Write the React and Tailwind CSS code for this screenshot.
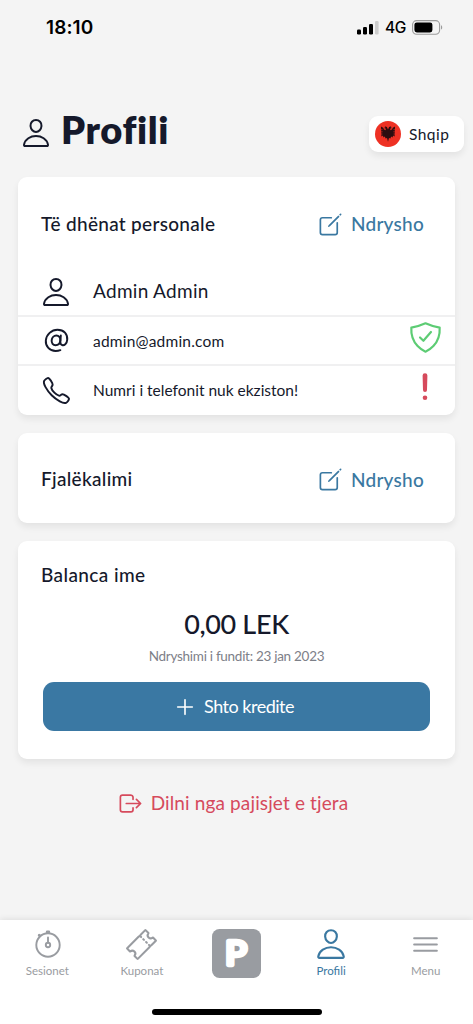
import {
  IoAddOutline,
  IoAtOutline,
  IoCallOutline,
  IoCreateOutline,
  IoLogOutOutline,
  IoMenuOutline,
  IoPersonOutline,
  IoShieldCheckmarkOutline,
  IoTicketOutline,
} from "react-icons/io5";

const EagleFlag = () => (
  <svg width="26" height="26" viewBox="0 0 26 26" className="shrink-0">
    <circle cx="13" cy="13" r="13" fill="#ee3124" />
    <path
      d="M13 8.4 11.9 6 9.8 5.2 10.4 6.3 9 7 10.6 7.6 10.8 9.2 9 8.6 8.2 6.8 6 5.4 6.4 15.6 8 14.4 8.4 16.6 9.8 15.4 10.6 17.6 12 17 13 20.8 14 17 15.4 17.6 16.2 15.4 17.6 16.6 18 14.4 19.6 15.6 20 5.4 17.8 6.8 17 8.6 15.2 9.2 15.4 7.6 17 7 15.6 6.3 16.2 5.2 14.1 6Z"
      fill="#2a0d10"
    />
    <path d="M6 8.6h1.6M6 10.8h1.8M6 13h1.6M18.4 8.6H20M18.2 10.8H20M18.4 13H20" stroke="#ee3124" strokeWidth="0.5" />
  </svg>
);

const StopwatchIcon = () => (
  <svg width="28" height="30" viewBox="0 0 28 30" fill="none" stroke="currentColor" strokeWidth="1.9" strokeLinecap="round" className="ml-px">
    <circle cx="14" cy="16" r="11.7" />
    <circle cx="14" cy="16" r="2.2" />
    <path d="M14 13.5V8.5" />
    <path d="M13.2 3h1.6M5.2 6.2l.6.6" strokeWidth="2.8" />
  </svg>
);

const SignalIcon = () => (
  <svg width="22" height="15" viewBox="0 0 22 15">
    <rect x="0" y="9.5" width="4" height="5" rx="1.2" />
    <rect x="6" y="7" width="4" height="7.5" rx="1.2" />
    <rect x="12" y="4" width="4" height="10.5" rx="1.2" />
    <rect x="18" y="1" width="3.6" height="13.5" rx="1.2" fill="#cdcdcd" />
  </svg>
);

const BatteryIcon = () => (
  <svg width="31" height="15" viewBox="0 0 31 15">
    <rect x="0.6" y="0.6" width="27" height="13.6" rx="4" fill="none" stroke="#9b9b9b" strokeWidth="1.1" />
    <rect x="2.4" y="2.4" width="18" height="10" rx="2.4" />
    <path d="M29 5.2c1.6.6 1.6 3.8 0 4.4z" fill="#9b9b9b" />
  </svg>
);

const EditButton = () => (
  <button className="flex items-center text-[#3a78a1]">
    <IoCreateOutline size={27} />
    <span className="ml-[7px] text-[19px] leading-6 font-medium tracking-[0.25px]">Ndrysho</span>
  </button>
);

const NAV_ITEMS = [
  { label: "Sesionet", icon: <StopwatchIcon /> },
  { label: "Kuponat", icon: <IoTicketOutline size={33} /> },
  { label: "", icon: null },
  { label: "Profili", icon: <IoPersonOutline size={34} />, active: true },
  { label: "Menu", icon: <IoMenuOutline size={33} /> },
];

const App = () => {
  return (
    <div className="flex h-[1024px] w-[473px] flex-col overflow-hidden bg-[#f4f4f4] font-[Lato,sans-serif] text-[#15192b]">
      {/* Status bar */}
      <div className="flex h-[54px] items-center justify-between pr-[30px] pl-[46px] text-black">
        <span className="pt-[2px] font-[Inter,sans-serif] text-[19px] font-semibold tracking-[0.1px]">18:10</span>
        <div className="flex items-center">
          <SignalIcon />
          <span className="ml-[6px] pt-px font-[Inter,sans-serif] text-[15.5px] font-medium tracking-[-0.4px]">4G</span>
          <span className="ml-[6px]">
            <BatteryIcon />
          </span>
        </div>
      </div>

      {/* Title */}
      <header className="mt-[54px] flex h-[52px] items-center justify-between pr-[9px] pl-[20px]">
        <div className="flex items-center">
          <IoPersonOutline size={32} className="mb-[3px]" />
          <h1 className="ml-[9px] pb-[11px] text-[38px] leading-[46px] font-extrabold tracking-[0.6px]">Profili</h1>
        </div>
        <button className="flex h-9 w-[95px] items-center rounded-[9px] bg-white pl-[6px] shadow-[0_4px_7px_rgba(0,0,0,0.07)]">
          <EagleFlag />
          <span className="ml-[8px] pt-px text-[15.5px] tracking-[0.45px]">Shqip</span>
        </button>
      </header>

      <main className="flex flex-1 flex-col px-[18px] pt-[17px]">
        {/* Personal data */}
        <section className="h-[238px] rounded-[9px] bg-white shadow-[0_4px_7px_rgba(0,0,0,0.07)]">
          <div className="flex h-[91px] items-center justify-between pt-[3px] pr-[31px] pl-[23px]">
            <h2 className="text-[19px] font-medium tracking-[0.3px]">Të dhënat personale</h2>
            <EditButton />
          </div>
          <div className="flex h-[49px] items-center border-b-2 border-[#f0f0f1] pl-[22px]">
            <IoPersonOutline size={32} />
            <span className="ml-[21px] text-[19px] tracking-[0.3px]">Admin Admin</span>
          </div>
          <div className="flex h-[49px] items-center border-b-2 border-[#f0f0f1] pr-[12px] pl-[23px]">
            <IoAtOutline size={31} />
            <span className="ml-[21px] flex-1 pt-[2px] text-[15.5px] tracking-[0.2px]">admin@admin.com</span>
            <IoShieldCheckmarkOutline size={35} className="mb-[6px] text-[#5dcc74]" />
          </div>
          <div className="flex h-[49px] items-center pr-[26px] pl-[23px]">
            <IoCallOutline size={31} />
            <span className="ml-[21px] flex-1 pt-px text-[15.5px]">Numri i telefonit nuk ekziston!</span>
            <svg width="8" height="28" viewBox="0 0 8 28" fill="#d64a5c" className="mb-[8px]">
              <path d="M1.6 2.6a2.4 2.4 0 0 1 4.8 0L6 17a2 2 0 0 1-4 0z" />
              <circle cx="4" cy="24.8" r="2.3" />
            </svg>
          </div>
        </section>

        {/* Password */}
        <section className="mt-[18px] flex h-[90px] items-center justify-between rounded-[9px] bg-white pt-[3px] pr-[31px] pl-[23px] shadow-[0_4px_7px_rgba(0,0,0,0.07)]">
          <h2 className="text-[19px] font-medium tracking-[0.3px]">Fjalëkalimi</h2>
          <EditButton />
        </section>

        {/* Balance */}
        <section className="mt-[18px] flex h-[218px] flex-col rounded-[9px] bg-white px-[25px] pt-[20px] shadow-[0_4px_7px_rgba(0,0,0,0.07)]">
          <h2 className="-ml-[2px] text-[19px] leading-7 font-medium tracking-[0.4px]">Balanca ime</h2>
          <p className="mt-[17px] text-center text-[27px] leading-[36px] font-medium tracking-[-0.35px]">0,00 LEK</p>
          <p className="mt-[4px] text-center text-[13.5px] leading-5 tracking-[-0.28px] text-[#7d8088]">Ndryshimi i fundit: 23 jan 2023</p>
          <button className="mt-[16px] flex h-[49px] items-center justify-center rounded-[11px] bg-[#3a78a3] pr-[7px] text-white">
            <IoAddOutline size={26} />
            <span className="ml-[6px] text-[18px] tracking-[-0.5px]">Shto kredite</span>
          </button>
        </section>

        <button className="mt-[30px] mr-[8px] flex items-center justify-center text-[#d64a5c]">
          <IoLogOutOutline size={27} />
          <span className="ml-[7px] text-[19px] tracking-[0.13px]">Dilni nga pajisjet e tjera</span>
        </button>
      </main>

      {/* Bottom navigation */}
      <nav className="flex h-[104px] flex-col items-center bg-white shadow-[0_-1px_6px_rgba(0,0,0,0.09)]">
        <div className="flex w-full flex-1">
          {NAV_ITEMS.map(({ label, icon, active }) => (
            <div
              key={label}
              className={`flex flex-1 flex-col items-center pt-[6px] ${active ? "text-[#3a78a1]" : "text-[#999ca1]"}`}
            >
              {icon ? (
                <>
                  <span className="flex h-9 items-center">{icon}</span>
                  <span className="mt-px text-[11.5px] leading-4">{label}</span>
                </>
              ) : (
                <svg width="49" height="49" viewBox="0 0 49 49" className="mt-[3px]">
                  <rect width="49" height="49" rx="7.5" fill="#999ca1" />
                  <text transform="translate(13.2 35.5) scale(1.12 1)" fontFamily="Lato, sans-serif" fontSize="32" fontWeight="400" fill="#fff" stroke="#fff" strokeWidth="4.4" strokeLinejoin="round">P</text>
                </svg>
              )}
            </div>
          ))}
        </div>
        <span className="mb-[9px] h-[6px] w-[170px] rounded-full bg-black" />
      </nav>
    </div>
  );
};

export default App;
